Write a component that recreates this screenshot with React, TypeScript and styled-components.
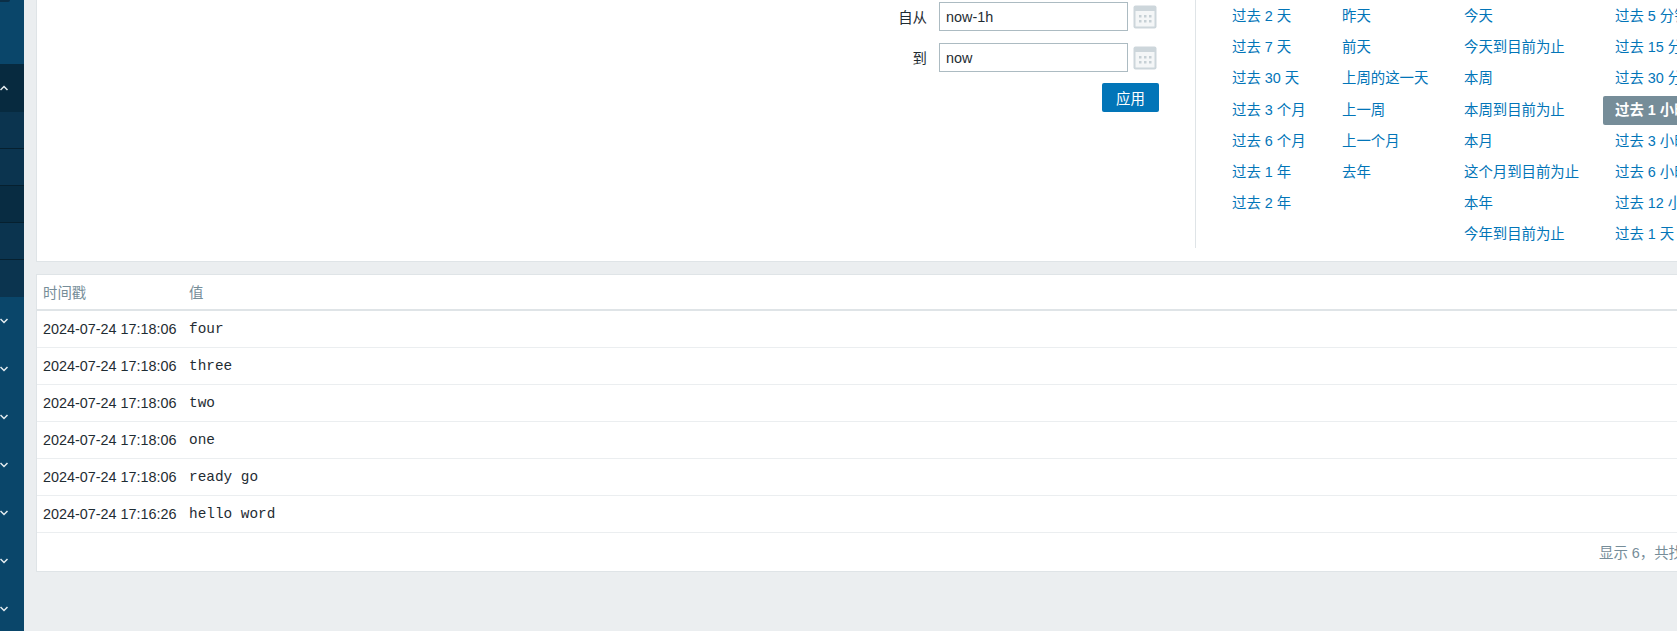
import styled, { createGlobalStyle } from "styled-components";

const GlobalStyle = createGlobalStyle`
  html, body {
    margin: 0;
    height: 631px;
    overflow: hidden;
    background: #ebeef0;
  }
  body {
    font-family: "Liberation Sans", "Noto Sans CJK SC", sans-serif;
    font-size: 14.4px;
    color: #1f2c33;
  }
`;

const Page = styled.div`
  display: flex;
  width: 1677px;
  height: 631px;
  overflow: hidden;
`;

const Sidebar = styled.nav`
  flex: 0 0 24px;
  display: flex;
  flex-direction: column;
  background: #0a466a;
`;

const LogoEdge = styled.div`
  flex: 0 0 2px;
  width: 10px;
  margin-bottom: 62px;
  background: #0b2f47;
  border-radius: 0 0 2px 0;
`;

const MenuHead = styled.div<{ $open?: boolean }>`
  flex: 0 0 48px;
  box-sizing: border-box;
  display: flex;
  align-items: center;
  background: ${(p) => (p.$open ? "#072a3f" : "transparent")};
  color: #e6edf1;
`;

const SubItem = styled.div<{ $dark?: boolean }>`
  flex: 0 0 37px;
  box-sizing: border-box;
  background: ${(p) => (p.$dark ? "#082c42" : "#0b344f")};
  border-bottom: 1px solid #06202f;
`;

const LastSubItem = styled(SubItem)`
  border-bottom: 0;
`;

const Chevron = styled.svg`
  display: block;
  width: 8px;
  height: 6px;
  fill: none;
  stroke: currentColor;
  stroke-width: 1.5;
`;

const Main = styled.main`
  flex: 0 0 1720px;
  display: flex;
  flex-direction: column;
  gap: 12px;
  box-sizing: border-box;
  padding-left: 12px;
`;

const Panel = styled.section`
  background: #fff;
  border: 1px solid #dfe4e7;
`;

const FilterPanel = styled(Panel)`
  flex: 0 0 262px;
  box-sizing: border-box;
  border-top: 0;
  display: flex;
`;

const RangeForm = styled.div`
  flex: 0 0 1158px;
  box-sizing: border-box;
  padding: 2px 36px 0 0;
  display: flex;
  flex-direction: column;
  align-items: flex-end;
`;

const FormRow = styled.div`
  display: flex;
  align-items: center;
  height: 29px;
  margin-bottom: 12px;
`;

const FieldLabel = styled.label`
  margin-right: 12px;
`;

const DateInput = styled.input`
  box-sizing: border-box;
  width: 189px;
  height: 29px;
  padding: 0 6px;
  border: 1px solid #acbbc2;
  border-radius: 0;
  outline: 0;
  background: #fff;
  color: #1f2c33;
  font: 14.4px "Liberation Sans", sans-serif;
`;

const CalendarIcon = styled.svg`
  display: block;
  width: 24px;
  height: 24px;
  margin: 0 2px 0 5px;
`;

const ApplyButton = styled.button`
  width: 57px;
  height: 29px;
  margin-top: -1px;
  padding: 0;
  border: 0;
  border-radius: 2px;
  background: #0275b8;
  color: #fff;
  font: 14.4px "Liberation Sans", "Noto Sans CJK SC", sans-serif;
`;

const Presets = styled.div`
  flex: 1;
  height: 248px;
  display: flex;
  border-left: 1px solid #dfe4e7;
  padding-left: 36px;
`;

const PresetColumn = styled.ul<{ $width: number }>`
  flex: 0 0 ${(p) => p.$width}px;
  margin: 0;
  padding: 2px 0 0;
  list-style: none;
`;

const Preset = styled.li<{ $active?: boolean }>`
  box-sizing: border-box;
  height: ${(p) => (p.$active ? "29.2px" : "31.2px")};
  width: max-content;
  min-width: 100px;
  margin: 0 0 ${(p) => (p.$active ? "2px" : "0")} -12px;
  padding: 0 12px;
  line-height: 29px;
  white-space: nowrap;
  border-radius: 2px;
  color: ${(p) => (p.$active ? "#fff" : "#0275b8")};
  background: ${(p) => (p.$active ? "#768d99" : "transparent")};
  font-weight: ${(p) => (p.$active ? "bold" : "normal")};
`;

const HistoryPanel = styled(Panel)`
  flex: 0 0 auto;
`;

const HistoryTable = styled.table`
  width: 100%;
  border-collapse: collapse;
`;

const HeadCell = styled.th`
  height: 35px;
  padding: 0 0 2px 6px;
  box-sizing: border-box;
  text-align: left;
  font-weight: normal;
  color: #768d99;
  border-bottom: 2px solid #dfe4e7;
`;

const Cell = styled.td`
  height: 36px;
  padding: 0 0 0 6px;
  white-space: nowrap;
  border-bottom: 1px solid #ebeef0;
`;

const TimeCell = styled(Cell)`
  width: 140px;
`;

const ValueCell = styled(Cell)`
  font-family: "Liberation Mono", monospace;
  font-size: 14.4px;
`;

const TableFooter = styled.div`
  height: 38px;
  line-height: 40px;
  padding-left: 1562px;
  color: #768d99;
  white-space: nowrap;
`;

const logRows = [
  ["2024-07-24 17:18:06", "four"],
  ["2024-07-24 17:18:06", "three"],
  ["2024-07-24 17:18:06", "two"],
  ["2024-07-24 17:18:06", "one"],
  ["2024-07-24 17:18:06", "ready go"],
  ["2024-07-24 17:16:26", "hello word"],
];

const presetColumns: { width: number; items: string[] }[] = [
  {
    width: 110,
    items: ["过去 2 天", "过去 7 天", "过去 30 天", "过去 3 个月", "过去 6 个月", "过去 1 年", "过去 2 年"],
  },
  {
    width: 122,
    items: ["昨天", "前天", "上周的这一天", "上一周", "上一个月", "去年"],
  },
  {
    width: 151,
    items: ["今天", "今天到目前为止", "本周", "本周到目前为止", "本月", "这个月到目前为止", "本年", "今年到目前为止"],
  },
  {
    width: 130,
    items: ["过去 5 分钟", "过去 15 分钟", "过去 30 分钟", "过去 1 小时", "过去 3 小时", "过去 6 小时", "过去 12 小时", "过去 1 天"],
  },
];

const Calendar = () => (
  <CalendarIcon viewBox="0 0 24 24">
    <rect x="0.5" y="0.5" width="23" height="23" rx="2" fill="#cdd6db" />
    <rect x="2.5" y="6" width="19" height="15.5" fill="#f4f6f7" />
    {[6, 11, 16].map((x) =>
      [10, 15].map((y) => <rect key={`${x}-${y}`} x={x} y={y} width="2.5" height="2.5" fill="#c6d0d5" />)
    )}
  </CalendarIcon>
);

const App = () => {
  return (
    <Page>
      <GlobalStyle />
      <Sidebar>
        <LogoEdge />
        <MenuHead $open>
          <Chevron viewBox="0 0 8 6">
            <path d="M0.5 5 L4 1.5 L7.5 5" />
          </Chevron>
        </MenuHead>
        <SubItem />
        <SubItem />
        <SubItem $dark />
        <SubItem />
        <LastSubItem />
        {[0, 1, 2, 3, 4, 5, 6].map((i) => (
          <MenuHead key={i}>
            <Chevron viewBox="0 0 8 6">
              <path d="M0.5 1 L4 4.5 L7.5 1" />
            </Chevron>
          </MenuHead>
        ))}
      </Sidebar>
      <Main>
        <FilterPanel>
          <RangeForm>
            <FormRow>
              <FieldLabel>自从</FieldLabel>
              <DateInput defaultValue="now-1h" />
              <Calendar />
            </FormRow>
            <FormRow>
              <FieldLabel>到</FieldLabel>
              <DateInput defaultValue="now" />
              <Calendar />
            </FormRow>
            <ApplyButton>应用</ApplyButton>
          </RangeForm>
          <Presets>
            {presetColumns.map((col) => (
              <PresetColumn key={col.width} $width={col.width}>
                {col.items.map((item) => (
                  <Preset key={item} $active={item === "过去 1 小时"}>
                    {item}
                  </Preset>
                ))}
              </PresetColumn>
            ))}
          </Presets>
        </FilterPanel>
        <HistoryPanel>
          <HistoryTable>
            <thead>
              <tr>
                <HeadCell>时间戳</HeadCell>
                <HeadCell>值</HeadCell>
              </tr>
            </thead>
            <tbody>
              {logRows.map(([time, value], i) => (
                <tr key={i}>
                  <TimeCell>{time}</TimeCell>
                  <ValueCell>{value}</ValueCell>
                </tr>
              ))}
            </tbody>
          </HistoryTable>
          <TableFooter>显示 6，共找到 6</TableFooter>
        </HistoryPanel>
      </Main>
    </Page>
  );
};

export default App;
